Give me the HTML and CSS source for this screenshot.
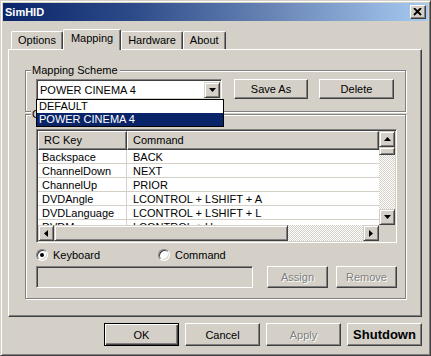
FILE: index.html
```html
<!DOCTYPE html>
<html lang="en">
<head>
  <meta charset="UTF-8">
  <title>SimHID</title>
  <link rel="stylesheet" href="styles.css">
</head>
<body>

<div class="window">
  <div class="titlebar">
    <span class="title">SimHID</span>
    <span class="close">
      <svg width="10" height="8" viewBox="0 0 10 8"><path d="M1 0 L8 7 M8 0 L1 7" stroke="#000" stroke-width="1.8" fill="none"/></svg>
    </span>
  </div>

  <div class="tabs">
    <div class="tab">Options</div>
    <div class="tab active">Mapping</div>
    <div class="tab">Hardware</div>
    <div class="tab">About</div>
  </div>

  <div class="panel">
    <div class="group scheme">
      <span class="group-label">Mapping Scheme</span>
      <div class="scheme-row">
        <div class="combo">
          <span class="combo-text">POWER CINEMA 4</span>
          <span class="arrow-btn combo-btn">
            <svg width="7" height="4" viewBox="0 0 7 4"><polygon points="0,0 7,0 3.5,4" fill="#000"/></svg>
          </span>
          <div class="droplist">
            <div class="drop-item">DEFAULT</div>
            <div class="drop-item selected">POWER CINEMA 4</div>
          </div>
        </div>
        <button class="btn save-btn">Save As</button>
        <button class="btn delete-btn">Delete</button>
      </div>
    </div>

    <div class="group commands">
      <span class="group-label">Command Mapping</span>
      <div class="listview">
        <div class="list-body">
          <div class="list-header">
            <div class="head-cell key-col">RC Key</div>
            <div class="head-cell">Command</div>
          </div>
          <div class="list-row"><div class="cell key-col">Backspace</div><div class="cell">BACK</div></div>
          <div class="list-row"><div class="cell key-col">ChannelDown</div><div class="cell">NEXT</div></div>
          <div class="list-row"><div class="cell key-col">ChannelUp</div><div class="cell">PRIOR</div></div>
          <div class="list-row"><div class="cell key-col">DVDAngle</div><div class="cell">LCONTROL + LSHIFT + A</div></div>
          <div class="list-row"><div class="cell key-col">DVDLanguage</div><div class="cell">LCONTROL + LSHIFT + L</div></div>
          <div class="list-row"><div class="cell key-col">DVDMenu</div><div class="cell">LCONTROL + U</div></div>
        </div>
        <div class="vscroll">
          <span class="arrow-btn">
            <svg width="7" height="4" viewBox="0 0 7 4"><polygon points="3.5,0 7,4 0,4" fill="#000"/></svg>
          </span>
          <span class="thumb vthumb"></span>
          <span class="track"></span>
          <span class="arrow-btn">
            <svg width="7" height="4" viewBox="0 0 7 4"><polygon points="0,0 7,0 3.5,4" fill="#000"/></svg>
          </span>
        </div>
        <div class="hscroll">
          <span class="arrow-btn">
            <svg width="4" height="7" viewBox="0 0 4 7"><polygon points="4,0 4,7 0,3.5" fill="#000"/></svg>
          </span>
          <span class="thumb hthumb"></span>
          <span class="track"></span>
          <span class="arrow-btn">
            <svg width="4" height="7" viewBox="0 0 4 7"><polygon points="0,0 4,3.5 0,7" fill="#000"/></svg>
          </span>
        </div>
        <div class="corner"></div>
      </div>

      <div class="radio-row">
        <label class="radio-item keyboard"><span class="radio checked"></span>Keyboard</label>
        <label class="radio-item"><span class="radio"></span>Command</label>
      </div>

      <div class="assign-row">
        <div class="field"></div>
        <button class="btn disabled assign-btn">Assign</button>
        <button class="btn disabled remove-btn">Remove</button>
      </div>
    </div>
  </div>

  <div class="footer">
    <button class="btn big default">OK</button>
    <button class="btn big">Cancel</button>
    <button class="btn big disabled">Apply</button>
    <button class="btn big shutdown">Shutdown</button>
  </div>
</div>

</body>
</html>
```

FILE: styles.css
```css
* {
  box-sizing: border-box;
}
body {
  margin: 0;
  background-color: #d4d0c8;
  font-family: "Liberation Sans", Arial, sans-serif;
  font-size: 11px;
  color: #000;
}
.window {
  width: 431px;
  height: 356px;
  padding: 2px;
  background-color: #d4d0c8;
  border: 1px solid;
  border-color: #d4d0c8 #404040 #404040 #d4d0c8;
  box-shadow: inset 1px 1px #fff, inset -1px -1px #808080;
}
.titlebar {
  height: 18px;
  display: flex;
  align-items: center;
  justify-content: space-between;
  padding: 0 2px 0 2px;
  background: linear-gradient(to right, #0a246a, #2c4a88 30%, #6c88b8 65%, #a6caf0);
  color: #fff;
  font-weight: bold;
}
.close {
  width: 16px;
  height: 14px;
  display: flex;
  align-items: center;
  justify-content: center;
  background-color: #d4d0c8;
  border: 1px solid;
  border-color: #fff #404040 #404040 #fff;
  box-shadow: inset -1px -1px #808080;
}
.tabs {
  display: flex;
  align-items: flex-end;
  height: 20px;
  margin: 8px 0 0 8px;
}
.tab {
  height: 18px;
  padding: 0 6px;
  line-height: 16px;
  border: 1px solid;
  border-bottom: none;
  border-color: #fff #404040 #404040 #fff;
  border-radius: 2px 2px 0 0;
  box-shadow: inset -1px 0 #808080;
}
.tab.active {
  height: 21px;
  padding: 0 7px;
  margin-bottom: -1px;
  position: relative;
  z-index: 1;
  background-color: #d4d0c8;
  line-height: 16px;
}
.panel {
  width: 414px;
  height: 268px;
  margin-left: 5px;
  padding: 20px 15px 0 16px;
  border: 1px solid;
  border-color: #fff #404040 #404040 #fff;
  box-shadow: inset -1px -1px #808080;
}
.group {
  position: relative;
  border: 1px solid #808080;
  box-shadow: inset 1px 1px #fff, 1px 1px #fff;
}
.group-label {
  position: absolute;
  top: -7px;
  left: 5px;
  padding: 0 2px 0 1px;
  line-height: 13px;
  background-color: #d4d0c8;
}
.scheme {
  height: 42px;
  padding: 8px 0 0 10px;
}
.scheme-row {
  display: flex;
  align-items: flex-start;
}
.combo {
  position: relative;
  z-index: 2;
  width: 186px;
  height: 21px;
  display: flex;
  align-items: center;
  justify-content: space-between;
  padding: 1px;
  background-color: #fff;
  border: 1px solid;
  border-color: #808080 #fff #fff #808080;
  box-shadow: inset 1px 1px #404040, inset -1px -1px #d4d0c8;
}
.combo-text {
  padding-left: 2px;
}
.combo-btn {
  height: 17px;
}
.droplist {
  position: absolute;
  top: 100%;
  left: -1px;
  width: 188px;
  background-color: #fff;
  border: 1px solid #000;
}
.drop-item {
  height: 13px;
  line-height: 13px;
  padding-left: 2px;
}
.drop-item.selected {
  background-color: #0a246a;
  color: #fff;
}
.btn {
  font-family: "Liberation Sans", Arial, sans-serif;
  font-size: 11px;
  color: #000;
  background-color: #d4d0c8;
  border: 1px solid;
  border-color: #fff #404040 #404040 #fff;
  box-shadow: inset -1px -1px #808080;
  padding: 0;
}
.save-btn {
  width: 74px;
  height: 20px;
  margin-left: 12px;
}
.delete-btn {
  width: 75px;
  height: 20px;
  margin-left: 11px;
}
.btn.disabled {
  color: #808080;
  text-shadow: 1px 1px #fff;
}
.commands {
  height: 185px;
  margin-top: 2px;
  padding: 14px 0 0 10px;
}
.listview {
  width: 361px;
  height: 114px;
  display: grid;
  grid-template-columns: 1fr 16px;
  grid-template-rows: 1fr 16px;
  padding: 1px;
  background-color: #fff;
  border: 1px solid;
  border-color: #808080 #fff #fff #808080;
  box-shadow: inset 1px 1px #404040, inset -1px -1px #d4d0c8;
}
.list-body {
  overflow: hidden;
}
.list-header {
  display: grid;
  grid-template-columns: 89px 1fr;
  height: 19px;
}
.head-cell {
  padding-left: 5px;
  line-height: 16px;
  background-color: #d4d0c8;
  border: 1px solid;
  border-color: #fff #404040 #404040 #fff;
  box-shadow: inset -1px -1px #808080;
}
.list-row {
  display: grid;
  grid-template-columns: 89px 1fr;
  height: 14px;
  border-bottom: 1px solid #d4d0c8;
}
.cell {
  padding-left: 6px;
  line-height: 14px;
  white-space: nowrap;
}
.cell.key-col {
  padding-left: 4px;
  border-right: 1px solid #d4d0c8;
}
.vscroll {
  display: flex;
  flex-direction: column;
}
.hscroll {
  display: flex;
}
.arrow-btn {
  width: 16px;
  height: 16px;
  flex: none;
  display: flex;
  align-items: center;
  justify-content: center;
  background-color: #d4d0c8;
  border: 1px solid;
  border-color: #d4d0c8 #404040 #404040 #d4d0c8;
  box-shadow: inset 1px 1px #fff, inset -1px -1px #808080;
}
.thumb {
  flex: none;
  background-color: #d4d0c8;
  border: 1px solid;
  border-color: #d4d0c8 #404040 #404040 #d4d0c8;
  box-shadow: inset 1px 1px #fff, inset -1px -1px #808080;
}
.vthumb {
  height: 8px;
}
.hthumb {
  width: 234px;
}
.track {
  flex: 1;
  background: repeating-conic-gradient(#fff 0 25%, #d4d0c8 0 50%) 0 0 / 2px 2px;
}
.corner {
  background-color: #d4d0c8;
}
.radio-row {
  display: flex;
  align-items: center;
  height: 12px;
  margin-top: 6px;
}
.radio-item {
  display: flex;
  align-items: center;
  gap: 5px;
}
.radio-item.keyboard {
  width: 122px;
}
.radio {
  width: 12px;
  height: 12px;
  border-radius: 50%;
  display: flex;
  align-items: center;
  justify-content: center;
  background-color: #fff;
  border: 1px solid;
  border-color: #808080 #fff #fff #808080;
  box-shadow: inset 1px 1px #404040, inset -1px -1px #d4d0c8;
}
.radio.checked::after {
  content: "";
  width: 4px;
  height: 4px;
  border-radius: 50%;
  background-color: #000;
}
.assign-row {
  display: flex;
  margin-top: 5px;
}
.field {
  width: 217px;
  height: 22px;
  border: 1px solid;
  border-color: #808080 #fff #fff #808080;
  box-shadow: inset 1px 1px #404040, inset -1px -1px #d4d0c8;
}
.assign-btn {
  width: 61px;
  height: 22px;
  margin-left: 14px;
}
.remove-btn {
  width: 61px;
  height: 22px;
  margin-left: 8px;
}
.footer {
  display: flex;
  justify-content: flex-end;
  gap: 6px;
  margin-top: 6px;
  padding-right: 6px;
}
.btn.big {
  width: 75px;
  height: 23px;
}
.btn.default {
  border-color: #000;
  box-shadow: inset 1px 1px #fff, inset -1px -1px #404040, inset -2px -2px #808080;
}
.btn.shutdown {
  font-size: 13px;
  font-weight: bold;
}
```
